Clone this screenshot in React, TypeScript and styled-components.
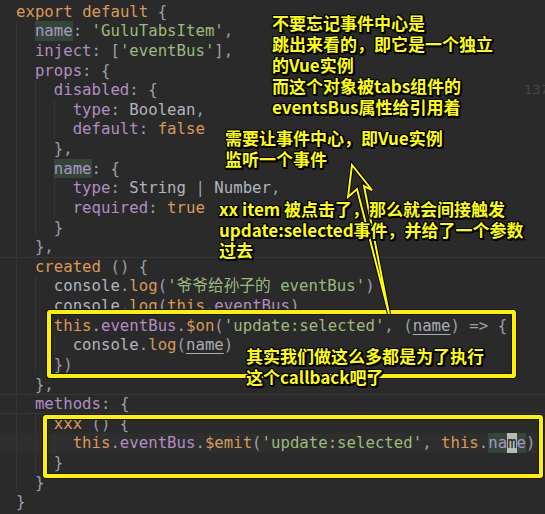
import React from "react";
import styled, { createGlobalStyle, css } from "styled-components";

const Global = createGlobalStyle`
  html, body { margin: 0; padding: 0; background: #2a2a2a; }
`;

type Kind = "k" | "p" | "s" | "t" | "u" | "f" | "n" | "h" | "c";
type Tok = [Kind, string];
type Row = { indent: number; toks: Tok[]; rule?: "top" | "both" | "current" };

const rows: Row[] = [
  { indent: 0, toks: [["k", "export"], ["t", " "], ["k", "default"], ["u", " {"]] },
  { indent: 1, toks: [["h", "name"], ["u", ": "], ["s", "'GuluTabsItem'"], ["u", ","]] },
  { indent: 1, toks: [["p", "inject"], ["u", ": ["], ["s", "'eventBus'"], ["u", "],"]] },
  { indent: 1, toks: [["p", "props"], ["u", ": {"]] },
  { indent: 2, toks: [["p", "disabled"], ["u", ": {"]] },
  { indent: 3, toks: [["p", "type"], ["u", ": "], ["t", "Boolean"], ["u", ","]] },
  { indent: 3, toks: [["p", "default"], ["u", ": "], ["k", "false"]] },
  { indent: 2, toks: [["u", "},"]] },
  { indent: 2, toks: [["h", "name"], ["u", ": {"]] },
  { indent: 3, toks: [["p", "type"], ["u", ": "], ["t", "String"], ["u", " | "], ["t", "Number"], ["u", ","]] },
  { indent: 3, toks: [["p", "required"], ["u", ": "], ["k", "true"]] },
  { indent: 2, toks: [["u", "}"]] },
  { indent: 1, toks: [["u", "},"]] },
  { indent: 1, rule: "top", toks: [["k", "created"], ["u", " () {"]] },
  { indent: 2, toks: [["t", "console"], ["u", "."], ["f", "log"], ["u", "("], ["s", "'爷爷给孙子的 eventBus'"], ["u", ")"]] },
  { indent: 2, toks: [["t", "console"], ["u", "."], ["f", "log"], ["u", "("], ["k", "this"], ["u", "."], ["p", "eventBus"], ["u", ")"]] },
  { indent: 2, toks: [["k", "this"], ["u", "."], ["p", "eventBus"], ["u", "."], ["f", "$on"], ["u", "("], ["s", "'update:selected'"], ["u", ", ("], ["n", "name"], ["u", ") => {"]] },
  { indent: 3, toks: [["t", "console"], ["u", "."], ["f", "log"], ["u", "("], ["n", "name"], ["u", ")"]] },
  { indent: 2, toks: [["u", "})"]] },
  { indent: 1, toks: [["u", "},"]] },
  { indent: 1, rule: "both", toks: [["p", "methods"], ["u", ": {"]] },
  { indent: 2, toks: [["k", "xxx"], ["u", " () {"]] },
  { indent: 3, rule: "current", toks: [["k", "this"], ["u", "."], ["p", "eventBus"], ["u", "."], ["f", "$emit"], ["u", "("], ["s", "'update:selected'"], ["u", ", "], ["k", "this"], ["u", "."], ["h", "na"], ["c", "m"], ["h", "e"], ["u", ")"]] },
  { indent: 2, toks: [["u", "}"]] },
  { indent: 1, toks: [["u", "}"]] },
  { indent: 0, toks: [["u", "}"]] },
];

const Screen = styled.div`
  position: relative;
  width: 545px;
  height: 514px;
  overflow: hidden;
  background: #2a2a2a;
`;

const Editor = styled.div`
  padding-top: 1.7px;
  font-family: "DejaVu Sans Mono", "Noto Sans CJK SC", monospace;
  font-size: 15.7px;
  color: #a9aeb6;
`;

const Line = styled.div<{ $rule?: Row["rule"] }>`
  display: flex;
  align-items: stretch;
  height: 19.64px;
  line-height: 19.64px;
  padding-left: 16px;
  white-space: pre;
  ${(p) => p.$rule === "top" && css`box-shadow: inset 0 1px 0 #363636;`}
  ${(p) => p.$rule === "both" && css`box-shadow: inset 0 1px 0 #363636, inset 0 -1px 0 #363636;`}
  ${(p) => p.$rule === "current" && css`background: #2e2e2e;`}
`;

const Guide = styled.span`
  display: inline-block;
  width: 2ch;
  box-shadow: inset 1px 0 0 #353535;
`;

const colors: Record<Kind, string> = {
  k: "#dc9a56",
  p: "#b18dc3",
  s: "#9dba7b",
  t: "#b0b5bd",
  u: "#9ba0a8",
  f: "#d69a56",
  n: "#a9aeb6",
  h: "#a996c6",
  c: "#1e1e1e",
};

const Token = styled.span<{ $kind: Kind }>`
  color: ${(p) => colors[p.$kind]};
  ${(p) => p.$kind === "h" && css`background: #344638;`}
  ${(p) => p.$kind === "c" && css`background: #b9b9b9;`}
  ${(p) => p.$kind === "n" && css`text-decoration: underline; text-underline-offset: 3px;`}
`;

const LineNo = styled.div`
  position: absolute;
  left: 524px;
  top: 82px;
  font-family: "DejaVu Sans", sans-serif;
  font-size: 13px;
  color: #454545;
`;

const Box = styled.div<{ $x: number; $y: number; $w: number; $h: number }>`
  position: absolute;
  left: ${(p) => p.$x}px;
  top: ${(p) => p.$y}px;
  width: ${(p) => p.$w}px;
  height: ${(p) => p.$h}px;
  box-sizing: border-box;
  border: 4px solid #fff200;
  border-radius: 3px;
  box-shadow: 0 0 0 1px #141400, inset 0 0 0 1px #141400;
`;

const Note = styled.div<{ $x: number; $y: number; $lh: number }>`
  position: absolute;
  left: ${(p) => p.$x}px;
  top: ${(p) => p.$y}px;
  font-family: "Noto Sans CJK SC", sans-serif;
  font-weight: 700;
  font-size: 17px;
  line-height: ${(p) => p.$lh}px;
  color: #ffff00;
  white-space: pre;
  text-shadow: -1px -1px 0 #000, 1px -1px 0 #000, -1px 1px 0 #000, 1px 1px 0 #000,
    0 -1px 0 #000, 0 1px 0 #000, -1px 0 0 #000, 1px 0 0 #000, 2px 2px 0 #000,
    0 2px 0 #000, 2px 0 0 #000;
`;

const Overlay = styled.svg`
  position: absolute;
  left: 0;
  top: 0;
  pointer-events: none;
`;

const arrow = "352,165 372,190 364,186 389,314 357,189 348,197";

export default function App() {
  return (
    <Screen>
      <Global />
      <Editor>
        {rows.map((r, i) => (
          <Line key={i} $rule={r.rule}>
            {Array.from({ length: r.indent }).map((_, g) => (
              <Guide key={g} />
            ))}
            {r.toks.map(([k, text], j) => (
              <Token key={j} $kind={k}>
                {text}
              </Token>
            ))}
          </Line>
        ))}
      </Editor>
      <LineNo>1379</LineNo>
      <Box $x={47} $y={310} $w={469} $h={68} />
      <Box $x={43} $y={415} $w={500} $h={63} />
      <Overlay width={545} height={514} viewBox="0 0 545 514">
        <polygon points={arrow} fill="none" stroke="#000" strokeWidth={4} strokeLinejoin="miter" />
        <polygon points={arrow} fill="none" stroke="#ffff00" strokeWidth={2} strokeLinejoin="miter" />
      </Overlay>
      <Note $x={272} $y={12} $lh={21}>
        {"不要忘记事件中心是\n跳出来看的，即它是一个独立\n的Vue实例\n而这个对象被tabs组件的\neventsBus属性给引用着"}
      </Note>
      <Note $x={225} $y={127} $lh={21}>
        {"需要让事件中心，即Vue实例\n监听一个事件"}
      </Note>
      <Note $x={219} $y={199} $lh={20.5}>
        {"xx item 被点击了，那么就会间接触发\nupdate:selected事件，并给了一个参数\n过去"}
      </Note>
      <Note $x={246} $y={345} $lh={21}>
        {"其实我们做这么多都是为了执行\n这个callback吧了"}
      </Note>
    </Screen>
  );
}
